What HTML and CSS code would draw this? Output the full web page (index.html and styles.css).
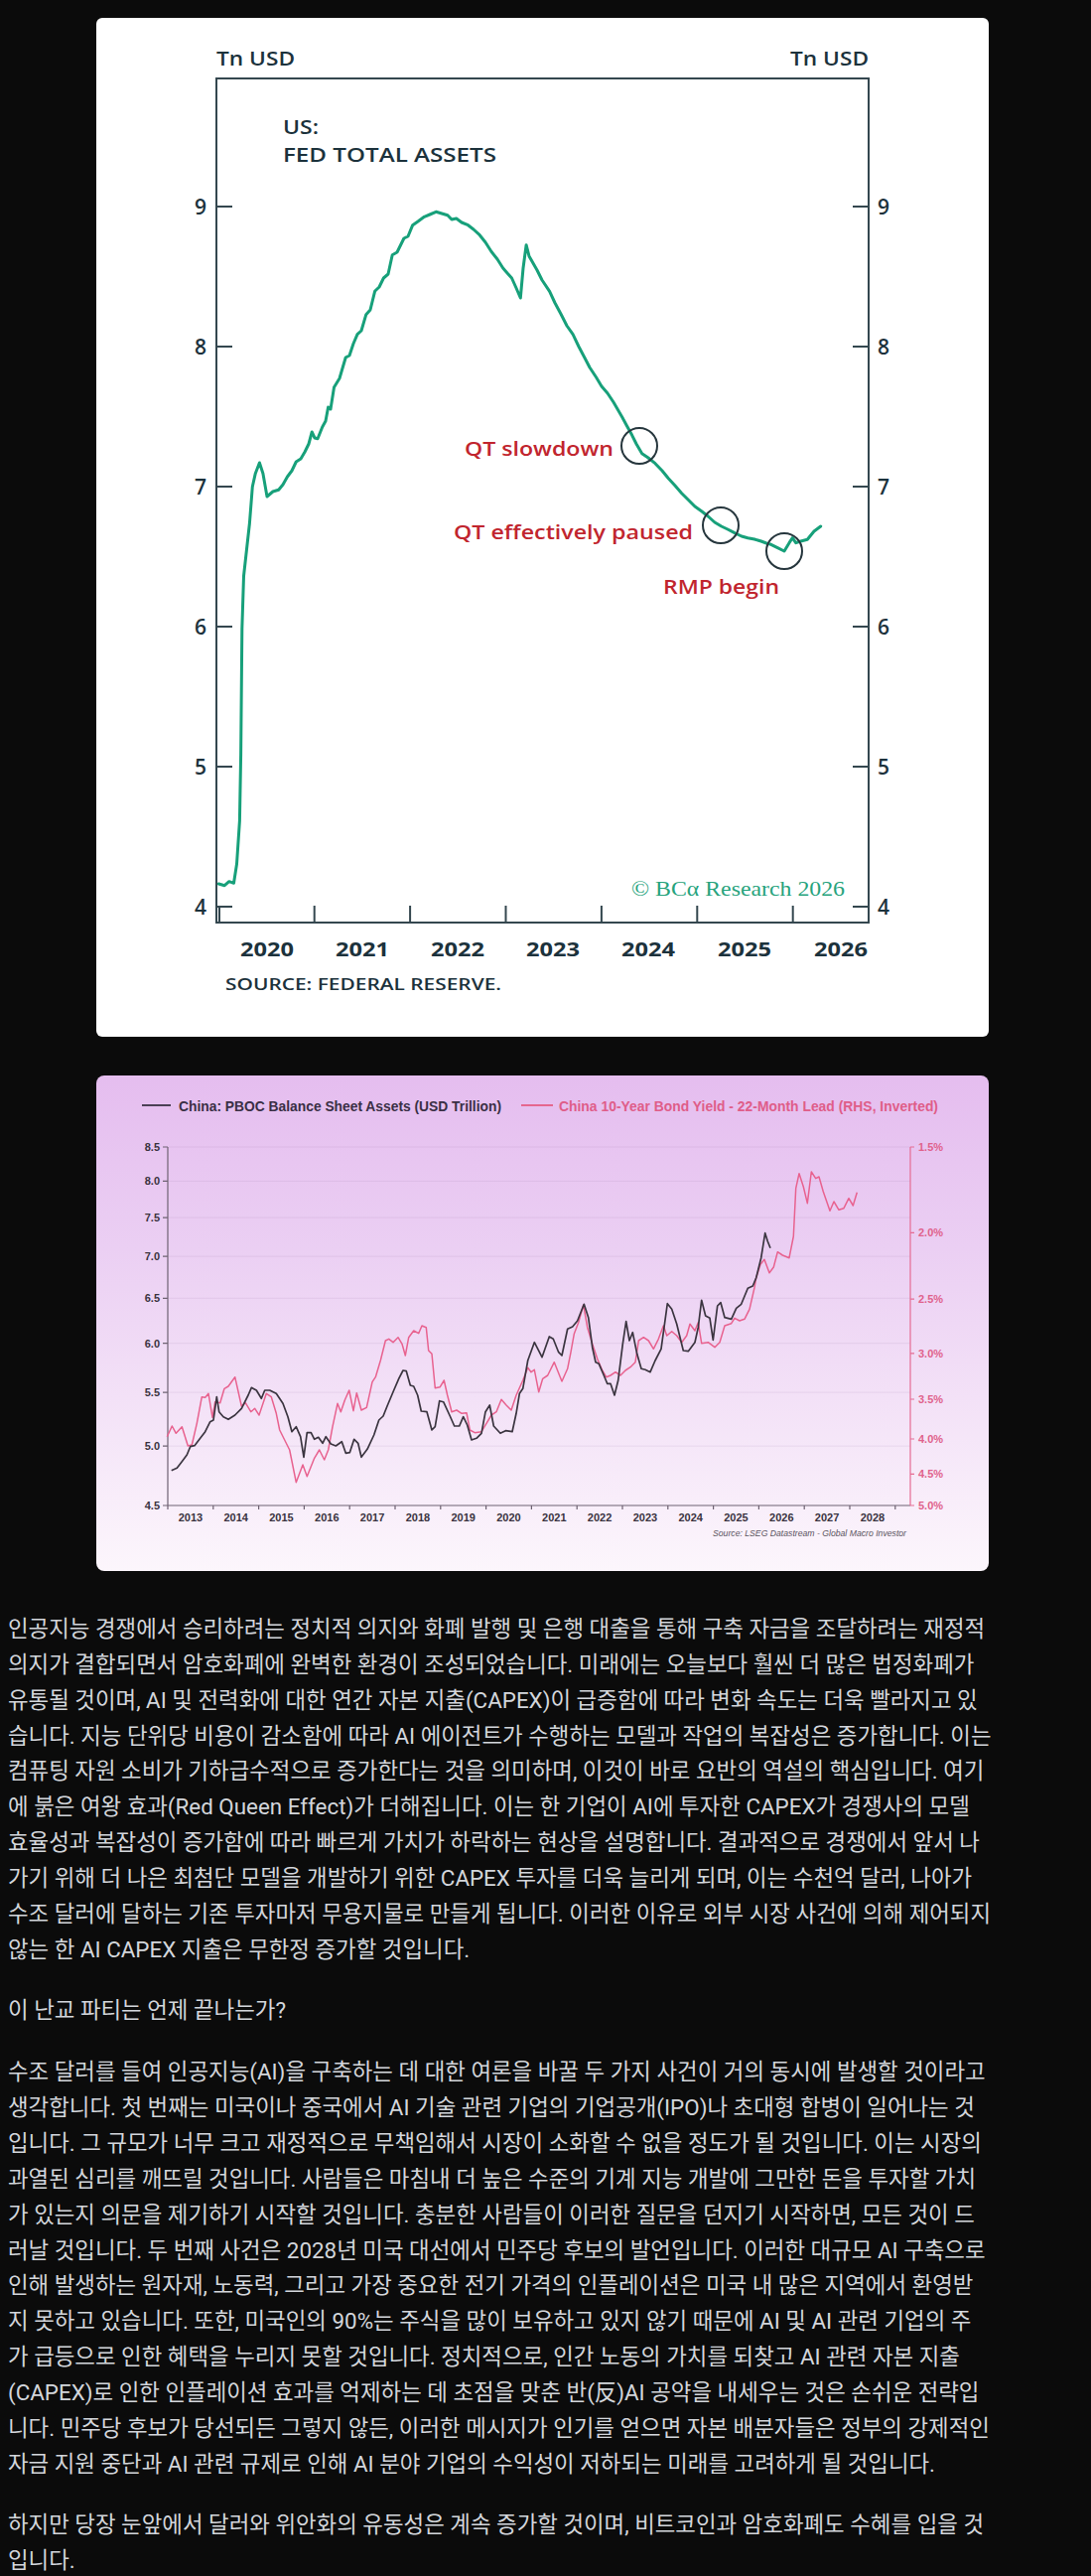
FILE: index.html
```html
<!DOCTYPE html>
<html lang="ko">
<head>
<meta charset="utf-8">
<title>Post</title>
<link rel="stylesheet" href="styles.css">
</head>
<body>
<main class="post">
  <div class="card card-fed">
    <svg class="chart" viewBox="97 18 899 1026" width="899" height="1026">
      <text class="fed-unit" x="218" y="66" textLength="79" lengthAdjust="spacingAndGlyphs">Tn USD</text>
      <text class="fed-unit" x="796" y="66" textLength="79" lengthAdjust="spacingAndGlyphs">Tn USD</text>
      <text class="fed-title" x="285" y="135" textLength="36" lengthAdjust="spacingAndGlyphs">US:</text>
      <text class="fed-title" x="285" y="163" textLength="215" lengthAdjust="spacingAndGlyphs">FED TOTAL ASSETS</text>
      <rect class="fed-frame" x="218" y="79" width="657" height="850"/>
      <path class="fed-tick" d="M218 208h16M218 349h16M218 490h16M218 631h16M218 772h16M218 913h16M859 208h16M859 349h16M859 490h16M859 631h16M859 772h16M859 913h16M221 929v-17M316.7 929v-17M413.1 929v-17M509.5 929v-17M605.9 929v-17M702.3 929v-17M798.7 929v-17"/>
      <g class="fed-num">
        <text x="208" y="216" text-anchor="end">9</text>
        <text x="208" y="357" text-anchor="end">8</text>
        <text x="208" y="498" text-anchor="end">7</text>
        <text x="208" y="639" text-anchor="end">6</text>
        <text x="208" y="780" text-anchor="end">5</text>
        <text x="208" y="921" text-anchor="end">4</text>
        <text x="884" y="216">9</text>
        <text x="884" y="357">8</text>
        <text x="884" y="498">7</text>
        <text x="884" y="639">6</text>
        <text x="884" y="780">5</text>
        <text x="884" y="921">4</text>
      </g>
      <g class="fed-year">
        <text x="242" y="963" textLength="54" lengthAdjust="spacingAndGlyphs">2020</text>
        <text x="338" y="963" textLength="54" lengthAdjust="spacingAndGlyphs">2021</text>
        <text x="434" y="963" textLength="54" lengthAdjust="spacingAndGlyphs">2022</text>
        <text x="530" y="963" textLength="54" lengthAdjust="spacingAndGlyphs">2023</text>
        <text x="626" y="963" textLength="54" lengthAdjust="spacingAndGlyphs">2024</text>
        <text x="723" y="963" textLength="54" lengthAdjust="spacingAndGlyphs">2025</text>
        <text x="820" y="963" textLength="54" lengthAdjust="spacingAndGlyphs">2026</text>
      </g>
      <text class="fed-source" x="227" y="997" textLength="278" lengthAdjust="spacingAndGlyphs">SOURCE: FEDERAL RESERVE.</text>
      <text class="fed-brand" x="636" y="902" textLength="215" lengthAdjust="spacingAndGlyphs">© BCα Research 2026</text>
      <polyline class="fed-line" points="220.3,890 226.2,891.7 230.8,887.7 235.5,889.3 238.5,870 241.4,826.7 242.6,760 243.8,633 245.5,580 248.5,553 251.4,527 254.3,490 257.3,476.7 261.4,466 264.9,476.7 269,500 274.9,495 280.7,493.3 285,488 289.5,480 294,474 298.3,465 303,462 307.1,455 311,447 314.2,435 317,441 320,441.7 324.7,430 328,424 330.6,410 333,412 336.5,390 342,381 348.2,360 352,358 356,346 360,336.7 364,333 368.8,316.7 373,312 377.6,293.3 382,289 386.4,280 391,276 395.2,256.7 400,254 406.9,240 411,238 415.7,226.7 421,223 427.4,218.3 433,216 439.2,213.3 445,215 450.9,216.7 455,221 459.7,220 465,224 471.5,226.7 477,231 483.2,236.7 489,244 494.9,253.3 501,261 506.7,270 511,275 515.5,280 520,290 524.3,300 527,270 530.1,246.7 533,258 536,263.3 541,272 546,282 553.6,293.3 559,305 565.3,316.7 571,328 577.1,336.7 583,349 588.8,360 594,370 600.6,380 606,389 612,396 618,405 626.7,420 631,428 636.7,438.3 641,447 646.7,456.7 653,461 660,466.7 667,474 673.3,481.7 680,489 686.7,496.7 693,503 700,510 707,515 713.3,520 720,526 726.7,530 733,533 740,536.7 747,540 753.3,541.7 760,543 766.7,545 772,547 776.7,548.3 783.3,551.7 790,555 795,546.7 798.3,541.7 801.7,546.7 806.7,545 813.3,543.3 820,535 826.7,530"/>
      <circle class="fed-ring" cx="644" cy="449" r="18"/>
      <circle class="fed-ring" cx="726" cy="529" r="18"/>
      <circle class="fed-ring" cx="790" cy="555" r="18"/>
      <text class="fed-note" x="468" y="459" textLength="150" lengthAdjust="spacingAndGlyphs">QT slowdown</text>
      <text class="fed-note" x="457" y="543" textLength="241" lengthAdjust="spacingAndGlyphs">QT effectively paused</text>
      <text class="fed-note" x="668" y="598" textLength="117" lengthAdjust="spacingAndGlyphs">RMP begin</text>
    </svg>
  </div>

  <div class="card card-pboc">
    <svg class="chart" viewBox="97 1083 899 499" width="899" height="499">
      <path class="pb-legend-dark" d="M143 1113H172"/>
      <text class="pb-legend pb-legend-text-dark" x="180" y="1119" textLength="325" lengthAdjust="spacingAndGlyphs">China: PBOC Balance Sheet Assets (USD Trillion)</text>
      <path class="pb-legend-pink" d="M525 1113H557"/>
      <text class="pb-legend pb-legend-text-pink" x="563" y="1119" textLength="382" lengthAdjust="spacingAndGlyphs">China 10-Year Bond Yield - 22-Month Lead (RHS, Inverted)</text>
      <path class="pb-grid" d="M170 1155H917M170 1189.4H917M170 1226.1H917M170 1265.2H917M170 1307.3H917M170 1352.7H917M170 1402.1H917M170 1456.2H917"/>
      <path class="pb-axis" d="M169 1155V1516H917M164 1155H169M164 1189.4H169M164 1226.1H169M164 1265.2H169M164 1307.3H169M164 1352.7H169M164 1402.1H169M164 1456.2H169M164 1516H169M169 1516v4M214.8 1516v4M260.6 1516v4M306.4 1516v4M352.2 1516v4M398 1516v4M443.8 1516v4M489.6 1516v4M535.4 1516v4M581.2 1516v4M627 1516v4M672.8 1516v4M718.6 1516v4M764.4 1516v4M810.2 1516v4M856 1516v4M901.8 1516v4"/>
      <path class="pb-axis-pink" d="M917 1155V1516M917 1155H921M917 1241.3H921M917 1308.1H921M917 1362.8H921M917 1409H921M917 1449H921M917 1484.4H921M917 1516H921"/>
      <g class="pb-num">
        <text x="161" y="1159" text-anchor="end">8.5</text>
        <text x="161" y="1193.4" text-anchor="end">8.0</text>
        <text x="161" y="1230.1" text-anchor="end">7.5</text>
        <text x="161" y="1269.2" text-anchor="end">7.0</text>
        <text x="161" y="1311.3" text-anchor="end">6.5</text>
        <text x="161" y="1356.7" text-anchor="end">6.0</text>
        <text x="161" y="1406.1" text-anchor="end">5.5</text>
        <text x="161" y="1460.2" text-anchor="end">5.0</text>
        <text x="161" y="1520" text-anchor="end">4.5</text>
      </g>
      <g class="pb-num pb-num-pink">
        <text x="925" y="1159">1.5%</text>
        <text x="925" y="1245.3">2.0%</text>
        <text x="925" y="1312.1">2.5%</text>
        <text x="925" y="1366.8">3.0%</text>
        <text x="925" y="1413">3.5%</text>
        <text x="925" y="1453">4.0%</text>
        <text x="925" y="1488.4">4.5%</text>
        <text x="925" y="1520">5.0%</text>
      </g>
      <g class="pb-num" text-anchor="middle">
        <text x="191.9" y="1532">2013</text>
        <text x="237.7" y="1532">2014</text>
        <text x="283.5" y="1532">2015</text>
        <text x="329.3" y="1532">2016</text>
        <text x="375.1" y="1532">2017</text>
        <text x="420.9" y="1532">2018</text>
        <text x="466.7" y="1532">2019</text>
        <text x="512.5" y="1532">2020</text>
        <text x="558.3" y="1532">2021</text>
        <text x="604.1" y="1532">2022</text>
        <text x="649.9" y="1532">2023</text>
        <text x="695.7" y="1532">2024</text>
        <text x="741.5" y="1532">2025</text>
        <text x="787.3" y="1532">2026</text>
        <text x="833.1" y="1532">2027</text>
        <text x="878.9" y="1532">2028</text>
      </g>
      <text class="pb-source" x="718" y="1547" textLength="195" lengthAdjust="spacingAndGlyphs">Source: LSEG Datastream - Global Macro Investor</text>
      <polyline class="pb-line-pink" points="168.3,1446.7 173.3,1436 177.3,1443.3 183.3,1436.7 189.3,1456 193.3,1455 198.3,1433.3 203.3,1406.7 206.7,1407.3 210,1403.3 214,1427.3 216.7,1411.7 221.7,1412.7 226,1398.3 230,1396 236.7,1386.7 243.3,1416 247.3,1412.7 252.7,1421.7 256.7,1418.3 261,1425 268.3,1403.3 273.3,1406.7 278.3,1423.3 281.7,1440 286.7,1450 291.7,1460 298.3,1492.7 305,1475 309.3,1486.7 316.7,1468.3 321.7,1460 326.7,1470 330.7,1460 335,1436.7 340,1413.3 343.3,1421.7 347.3,1410 351.7,1400 356,1420.7 359.3,1402.7 364,1420 369.3,1417.3 375,1391.7 378.3,1386.7 383.3,1370 388.3,1350 391.7,1348.3 396,1351.7 401,1346.7 405,1353.3 408.3,1365 411.7,1346.7 416.7,1340 421.7,1342.7 425,1335 429.3,1336.7 431.7,1360 435,1363.3 438.3,1397.7 443.3,1396.7 447.3,1390 450.7,1405 455,1421.7 460,1420 465,1423.3 470,1422.7 473.3,1440 478.3,1442.7 485,1441.7 490,1433.3 495,1425 500,1421.7 505,1409.3 510,1415 515,1420 520,1405 526.7,1390 531.7,1377.3 535,1381.7 538.3,1379.3 542.7,1401.7 546.7,1388.3 551.7,1385 558.3,1371.7 566,1391 571.7,1378.3 575,1361.7 578.3,1343.3 582.7,1331.7 587.7,1314 591.7,1336.7 596.7,1353.3 601.7,1368.3 606.7,1380 610.7,1386.7 615,1385 620,1381.7 625,1385 630,1380 635,1376.7 640,1371.7 643.3,1350 648.3,1346.7 653.3,1350 658.3,1358.3 663.3,1348.3 668.3,1335 671.7,1345 676.7,1340.7 681.7,1345 686.7,1351.7 691.7,1345 695,1333.3 700,1340 703.3,1331.7 706.7,1352.7 713.3,1351.7 720,1356.7 725,1351.7 730,1335 736.7,1332.7 740,1327.3 745,1330 750,1328.3 755,1318.3 760,1296.7 761.7,1286.7 766,1273.3 770,1268.3 775,1281.7 779.3,1276 783.3,1260.7 788.3,1264 795,1266.7 799.3,1245 801.7,1196.7 805,1181.7 809.3,1195 813.3,1211.7 817.3,1180 821.7,1186.7 825,1185 829.3,1200 836,1219.3 840,1210 845,1218.3 850,1216.7 855,1206.7 859.3,1214 863.3,1200.7"/>
      <polyline class="pb-line-dark" points="172.7,1480.7 178.3,1478.3 183.3,1471.7 188.3,1465 191.7,1456.7 196,1455.7 201.7,1448.3 206.7,1441.7 211.7,1431.7 215,1430 218.3,1406.7 220.7,1421.7 225,1426.7 230,1429.3 236.7,1425 243.3,1418.3 250,1405 253.3,1397.3 258.3,1400 263.3,1408.3 266.7,1400 271.7,1400 278.3,1403.3 285,1413.3 290,1426.7 294,1441.7 298.3,1436.7 302.7,1446.7 306,1467.3 309.3,1442.7 313.3,1442.7 316.7,1449.3 320.7,1447.3 325,1453.3 328.3,1446.7 333.3,1454 338.3,1456 344.3,1451.7 348.3,1463.3 352.3,1462.7 356.7,1449.3 360.7,1453.3 364,1467.3 370,1459.3 376.7,1445 381.7,1430 386,1426 390,1416 396.7,1400 401.7,1388.3 406,1380 409.3,1380.7 413.3,1395 416.7,1396 420.7,1405 424.3,1421 430,1421.7 435,1440 438.3,1436.7 442.7,1410.7 446.7,1411.7 453.3,1426 457.7,1436 462.7,1436 466.7,1426.7 470.7,1435 475,1450 480,1448.3 485,1443.3 489,1421.7 493.3,1415 497.3,1436 504,1443.3 509.3,1440.7 516,1441.7 520,1423.3 523.3,1403.3 526.7,1398.3 531.7,1370 538.3,1351.7 546,1366.7 553.3,1346 557.3,1348.3 562.7,1361.7 566,1365 571.7,1338.3 576.7,1336 581.7,1330 588.3,1313.3 592.7,1326.7 596.7,1356.7 600,1371.7 603.3,1373.3 608.3,1385 611.7,1393.3 615,1393.3 619,1405 622.7,1390 627.3,1353.3 630.7,1330.7 634,1350 637.3,1341.7 641.7,1363.3 646,1378.3 650,1379.3 655,1381.7 660,1370 666,1358.3 672.3,1312.7 676.7,1318.3 681.7,1333.3 688.3,1360 693.3,1360.7 700,1351.7 703.3,1336.7 706.7,1309.3 710.7,1325 715,1327.3 718.3,1349.3 722.7,1315 726,1311.7 730,1326.7 736.7,1328.3 741.7,1317.3 746.7,1313.3 753.3,1297.3 758.3,1295 761.7,1286.7 766.7,1266.7 770.7,1241.7 773.3,1250 776,1256.7"/>
    </svg>
  </div>

  <div class="article">
    <p>인공지능 경쟁에서 승리하려는 정치적 의지와 화폐 발행 및 은행 대출을 통해 구축 자금을 조달하려는 재정적<br>의지가 결합되면서 암호화폐에 완벽한 환경이 조성되었습니다. 미래에는 오늘보다 훨씬 더 많은 법정화폐가<br>유통될 것이며, AI 및 전력화에 대한 연간 자본 지출(CAPEX)이 급증함에 따라 변화 속도는 더욱 빨라지고 있<br>습니다. 지능 단위당 비용이 감소함에 따라 AI 에이전트가 수행하는 모델과 작업의 복잡성은 증가합니다. 이는<br>컴퓨팅 자원 소비가 기하급수적으로 증가한다는 것을 의미하며, 이것이 바로 요반의 역설의 핵심입니다. 여기<br>에 붉은 여왕 효과(Red Queen Effect)가 더해집니다. 이는 한 기업이 AI에 투자한 CAPEX가 경쟁사의 모델<br>효율성과 복잡성이 증가함에 따라 빠르게 가치가 하락하는 현상을 설명합니다. 결과적으로 경쟁에서 앞서 나<br>가기 위해 더 나은 최첨단 모델을 개발하기 위한 CAPEX 투자를 더욱 늘리게 되며, 이는 수천억 달러, 나아가<br>수조 달러에 달하는 기존 투자마저 무용지물로 만들게 됩니다. 이러한 이유로 외부 시장 사건에 의해 제어되지<br>않는 한 AI CAPEX 지출은 무한정 증가할 것입니다.</p>
    <p>이 난교 파티는 언제 끝나는가?</p>
    <p>수조 달러를 들여 인공지능(AI)을 구축하는 데 대한 여론을 바꿀 두 가지 사건이 거의 동시에 발생할 것이라고<br>생각합니다. 첫 번째는 미국이나 중국에서 AI 기술 관련 기업의 기업공개(IPO)나 초대형 합병이 일어나는 것<br>입니다. 그 규모가 너무 크고 재정적으로 무책임해서 시장이 소화할 수 없을 정도가 될 것입니다. 이는 시장의<br>과열된 심리를 깨뜨릴 것입니다. 사람들은 마침내 더 높은 수준의 기계 지능 개발에 그만한 돈을 투자할 가치<br>가 있는지 의문을 제기하기 시작할 것입니다. 충분한 사람들이 이러한 질문을 던지기 시작하면, 모든 것이 드<br>러날 것입니다. 두 번째 사건은 2028년 미국 대선에서 민주당 후보의 발언입니다. 이러한 대규모 AI 구축으로<br>인해 발생하는 원자재, 노동력, 그리고 가장 중요한 전기 가격의 인플레이션은 미국 내 많은 지역에서 환영받<br>지 못하고 있습니다. 또한, 미국인의 90%는 주식을 많이 보유하고 있지 않기 때문에 AI 및 AI 관련 기업의 주<br>가 급등으로 인한 혜택을 누리지 못할 것입니다. 정치적으로, 인간 노동의 가치를 되찾고 AI 관련 자본 지출<br>(CAPEX)로 인한 인플레이션 효과를 억제하는 데 초점을 맞춘 반(反)AI 공약을 내세우는 것은 손쉬운 전략입<br>니다. 민주당 후보가 당선되든 그렇지 않든, 이러한 메시지가 인기를 얻으면 자본 배분자들은 정부의 강제적인<br>자금 지원 중단과 AI 관련 규제로 인해 AI 분야 기업의 수익성이 저하되는 미래를 고려하게 될 것입니다.</p>
    <p>하지만 당장 눈앞에서 달러와 위안화의 유동성은 계속 증가할 것이며, 비트코인과 암호화폐도 수혜를 입을 것<br>입니다.</p>
  </div>
</main>
</body>
</html>
```

FILE: styles.css
```css
* {
  box-sizing: border-box;
}

html,
body {
  margin: 0;
  background: #0b0b0b;
}

.post {
  padding: 18px 0 20px 8px;
}

.card {
  width: 899px;
  margin: 0 0 39px 89px;
  overflow: hidden;
}

.card-fed {
  height: 1026px;
  background: #ffffff;
  border-radius: 6px;
}

.card-pboc {
  height: 499px;
  border-radius: 8px;
  margin-bottom: 41px;
  background: linear-gradient(180deg, #e5bdef 0%, #ebcff3 35%, #f3e1f7 65%, #fcf6fc 100%);
}

.chart {
  display: block;
}

/* FED chart */
.fed-unit,
.fed-title {
  font: 600 20px "Open Sans", "Liberation Sans", sans-serif;
  fill: #1c323c;
}

.fed-frame {
  fill: none;
  stroke: #34474f;
  stroke-width: 2;
}

.fed-tick {
  fill: none;
  stroke: #34474f;
  stroke-width: 2;
}

.fed-num text {
  font: 600 21px "Open Sans", "Liberation Sans", sans-serif;
  fill: #1c323c;
}

.fed-year text {
  font: 700 19px "Open Sans", "Liberation Sans", sans-serif;
  fill: #1c323c;
}

.fed-source {
  font: 600 17px "Open Sans", "Liberation Sans", sans-serif;
  fill: #1c323c;
}

.fed-brand {
  font: 400 21px "Liberation Serif", "DejaVu Serif", serif;
  fill: #27a37d;
}

.fed-line {
  fill: none;
  stroke: #17a07a;
  stroke-width: 3;
  stroke-linejoin: round;
  stroke-linecap: round;
}

.fed-ring {
  fill: none;
  stroke: #26363d;
  stroke-width: 2;
}

.fed-note {
  font: 600 20px "Open Sans", "Liberation Sans", sans-serif;
  fill: #c1252e;
}

/* PBOC chart */
.pb-legend {
  font: 700 14px "Liberation Sans", Arial, sans-serif;
}

.pb-legend-text-dark {
  fill: #3a2f45;
}

.pb-legend-text-pink {
  fill: #df5d89;
}

.pb-legend-dark {
  stroke: #4b4055;
  stroke-width: 2;
}

.pb-legend-pink {
  stroke: #e5678f;
  stroke-width: 2;
}

.pb-grid {
  fill: none;
  stroke: rgba(120, 80, 135, 0.1);
  stroke-width: 1;
}

.pb-axis {
  fill: none;
  stroke: #6e6272;
  stroke-width: 1.2;
}

.pb-axis-pink {
  fill: none;
  stroke: #e56c93;
  stroke-width: 1.2;
}

.pb-num text {
  font: 700 11px "Liberation Sans", Arial, sans-serif;
  fill: #3a3340;
}

.pb-num-pink text {
  fill: #e0628c;
}

.pb-source {
  font: italic 400 9.5px "Liberation Sans", Arial, sans-serif;
  fill: #5a5460;
}

.pb-line-dark {
  fill: none;
  stroke: #3b3540;
  stroke-width: 1.7;
  stroke-linejoin: round;
}

.pb-line-pink {
  fill: none;
  stroke: #e8628f;
  stroke-width: 1.5;
  stroke-linejoin: round;
}

/* Article text */
.article {
  color: #d3d6db;
  font-family: Roboto, "Noto Sans CJK KR", sans-serif;
  font-size: 22.4px;
  line-height: 1.6;
}

.article p {
  margin: 0 0 26px;
  white-space: nowrap;
}
```
